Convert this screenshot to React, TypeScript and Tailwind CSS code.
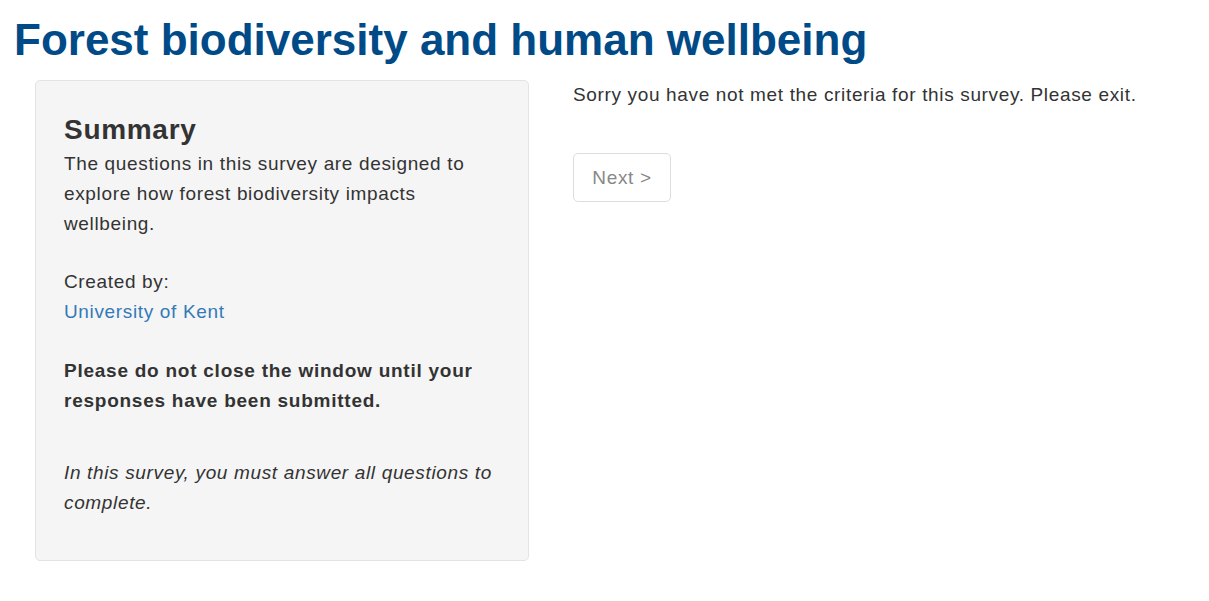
export default function App() {
  return (
    <div className="min-h-[601px] bg-white text-[#333] font-['Liberation_Sans',Arial,sans-serif] text-[19px] leading-[30px] tracking-[0.65px]">
      <h1 className="pl-[14px] pt-[15px] text-[44px] leading-[50px] font-bold tracking-normal text-[#004b87]">
        Forest biodiversity and human wellbeing
      </h1>
      <div className="mt-[15px] flex pl-[35px]">
        <aside className="w-[494px] shrink-0 rounded-[5px] border border-[#e3e3e3] bg-[#f5f5f5] px-[28px] pt-[32px] pb-[42px]">
          <h3 className="text-[28px] leading-[34px] font-bold tracking-[0.7px]">Summary</h3>
          <p className="mt-[2px]">
            The questions in this survey are designed to explore how forest biodiversity impacts wellbeing.
          </p>
          <p className="mt-[28px]">
            Created by:
            <br />
            <a href="#" className="text-[#337ab7]">University of Kent</a>
          </p>
          <p className="mt-[29px] font-bold tracking-[0.75px]">
            Please do not close the window until your responses have been submitted.
          </p>
          <p className="mt-[42px] italic">
            In this survey, you must answer all questions to complete.
          </p>
        </aside>
        <main className="ml-[44px] flex flex-col items-start">
          <p>Sorry you have not met the criteria for this survey. Please exit.</p>
          <button
            type="button"
            className="mt-[43px] h-[49px] w-[98px] rounded-[5px] border border-[#ddd] bg-white text-[19px] text-[#888]"
          >
            Next &gt;
          </button>
        </main>
      </div>
    </div>
  );
}
